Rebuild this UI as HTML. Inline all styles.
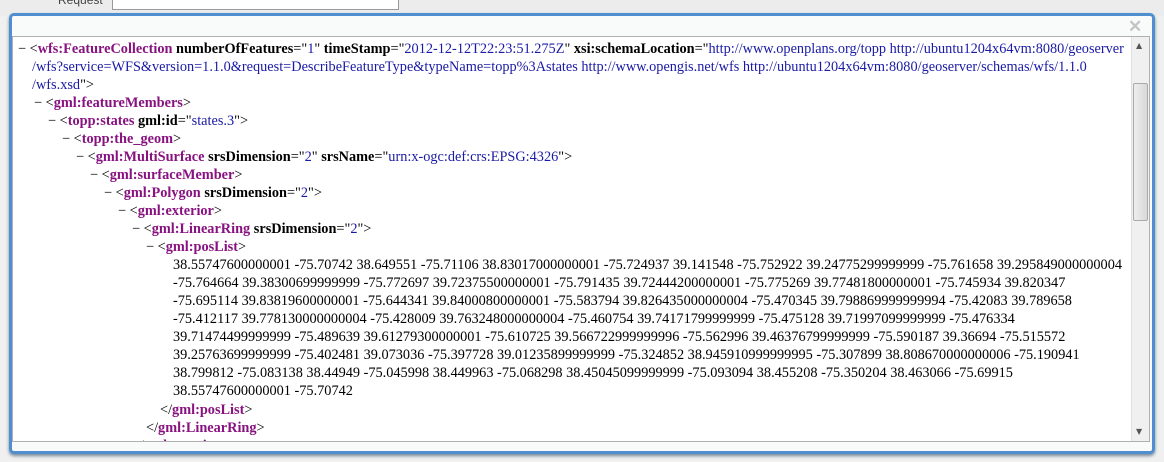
<!DOCTYPE html>
<html><head><style>
body{margin:0;width:1164px;height:462px;overflow:hidden;background:#f0f0f0;position:relative;font-family:"Liberation Serif",serif;}
.top{position:absolute;left:0;top:0;width:1164px;height:16px;background:#ececec;}
.sel{position:absolute;left:112px;top:-6px;width:285px;height:14px;border:1px solid #999;background:#fff;}
.req{position:absolute;left:58px;top:-7px;font:12px "Liberation Sans",sans-serif;color:#444;}
.dlg{position:absolute;left:9px;top:13px;width:1140px;height:435px;border:3px solid #4f8fcf;border-radius:5px;background:#f9fbfb;box-shadow:0 2px 3px #789;}
.x{position:absolute;left:1128px;top:17px;font:bold 17px "Liberation Sans",sans-serif;color:#c4c4c4;}
.box{position:absolute;left:12px;top:36px;width:1136px;height:404px;border:1px solid #b0b0b0;background:#fff;overflow:hidden;}
.sb{position:absolute;left:1118px;top:0;width:17px;height:404px;background:#f0f0f0;border-left:1px solid #e0e0e0;}
.th{position:absolute;left:1px;top:46px;width:13px;height:136px;background:linear-gradient(90deg,#eee,#d8d8d8);border:1px solid #aaa;border-radius:2px;}
.ar{position:absolute;left:4px;font-size:8px;color:#555;font-family:"DejaVu Sans",sans-serif;}
.l{position:absolute;white-space:pre;font-size:14.3px;line-height:18px;color:#000;}
.t{color:#881280;font-weight:bold;}
.a{font-weight:bold;}
.v{color:#1a1aa6;}
</style></head><body>
<div class="top"><span class="req">Request</span><div class="sel"></div></div>
<div class="dlg"></div>
<div class="x">✕</div>
<div class="box">
<div class="l" style="left:5px;top:3px">− &lt;<span class="t">wfs:FeatureCollection</span> <span class="a">numberOfFeatures</span>="<span class="v">1</span>" <span class="a">timeStamp</span>="<span class="v">2012-12-12T22:23:51.275Z</span>" <span class="a">xsi:schemaLocation</span>="<span class="v">http://www.openplans.org/topp http://ubuntu1204x64vm:8080/geoserver</span></div>
<div class="l v" style="left:19px;top:21px">/wfs?service=WFS&amp;version=1.1.0&amp;request=DescribeFeatureType&amp;typeName=topp%3Astates http://www.opengis.net/wfs http://ubuntu1204x64vm:8080/geoserver/schemas/wfs/1.1.0</div>
<div class="l" style="left:19px;top:39px"><span class="v">/wfs.xsd</span>"&gt;</div>
<div class="l" style="left:21px;top:57px">− &lt;<span class="t">gml:featureMembers</span>&gt;</div>
<div class="l" style="left:35px;top:75px">− &lt;<span class="t">topp:states</span> <span class="a">gml:id</span>="<span class="v">states.3</span>"&gt;</div>
<div class="l" style="left:49px;top:93px">− &lt;<span class="t">topp:the_geom</span>&gt;</div>
<div class="l" style="left:63px;top:111px">− &lt;<span class="t">gml:MultiSurface</span> <span class="a">srsDimension</span>="<span class="v">2</span>" <span class="a">srsName</span>="<span class="v">urn:x-ogc:def:crs:EPSG:4326</span>"&gt;</div>
<div class="l" style="left:77px;top:129px">− &lt;<span class="t">gml:surfaceMember</span>&gt;</div>
<div class="l" style="left:91px;top:147px">− &lt;<span class="t">gml:Polygon</span> <span class="a">srsDimension</span>="<span class="v">2</span>"&gt;</div>
<div class="l" style="left:105px;top:165px">− &lt;<span class="t">gml:exterior</span>&gt;</div>
<div class="l" style="left:119px;top:183px">− &lt;<span class="t">gml:LinearRing</span> <span class="a">srsDimension</span>="<span class="v">2</span>"&gt;</div>
<div class="l" style="left:133px;top:201px">− &lt;<span class="t">gml:posList</span>&gt;</div>
<div class="l" style="left:160px;top:219px">38.55747600000001 -75.70742 38.649551 -75.71106 38.83017000000001 -75.724937 39.141548 -75.752922 39.24775299999999 -75.761658 39.295849000000004
-75.764664 39.38300699999999 -75.772697 39.72375500000001 -75.791435 39.72444200000001 -75.775269 39.77481800000001 -75.745934 39.820347
-75.695114 39.83819600000001 -75.644341 39.84000800000001 -75.583794 39.826435000000004 -75.470345 39.798869999999994 -75.42083 39.789658
-75.412117 39.778130000000004 -75.428009 39.763248000000004 -75.460754 39.74171799999999 -75.475128 39.71997099999999 -75.476334
39.71474499999999 -75.489639 39.61279300000001 -75.610725 39.566722999999996 -75.562996 39.46376799999999 -75.590187 39.36694 -75.515572
39.25763699999999 -75.402481 39.073036 -75.397728 39.01235899999999 -75.324852 38.945910999999995 -75.307899 38.808670000000006 -75.190941
38.799812 -75.083138 38.44949 -75.045998 38.449963 -75.068298 38.45045099999999 -75.093094 38.455208 -75.350204 38.463066 -75.69915
38.55747600000001 -75.70742</div>
<div class="l" style="left:147px;top:364px">&lt;/<span class="t">gml:posList</span>&gt;</div>
<div class="l" style="left:133px;top:382px">&lt;/<span class="t">gml:LinearRing</span>&gt;</div>
<div class="l" style="left:119px;top:400px">&lt;/<span class="t">gml:exterior</span>&gt;</div>
<div class="sb"><span class="ar" style="top:4px">▲</span><div class="th"></div><span class="ar" style="top:390px">▼</span></div>
</div>
</body></html>
